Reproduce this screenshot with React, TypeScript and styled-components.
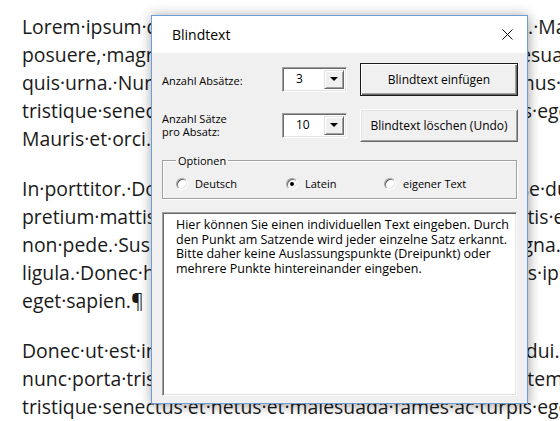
import styled, { createGlobalStyle } from "styled-components"

const GlobalStyle = createGlobalStyle`
  html, body {
    margin: 0;
    padding: 0;
    background: #fff;
  }
  body {
    width: 560px;
    height: 421px;
    overflow: hidden;
  }
`

const Seite = styled.div`
  position: relative;
  width: 560px;
  height: 421px;
  overflow: hidden;
  background: #fff;
`

const Dokument = styled.div`
  padding: 13px 0 0 22px;
  font-family: "Open Sans", sans-serif;
  font-size: 19.4px;
  line-height: 28px;
  color: #1a1a1a;
  white-space: nowrap;
`

const Absatz = styled.p`
  margin: 0 0 22px;
`

const Zeile = styled.div``

const Dialog = styled.div`
  position: absolute;
  left: 151px;
  top: 15px;
  width: 377px;
  height: 389px;
  box-sizing: border-box;
  border: 1px solid #6d9fd6;
  background: #f0f0f0;
  box-shadow: 0 0 12px rgba(0, 0, 0, 0.28), 2px 4px 10px rgba(0, 0, 0, 0.12);
  display: flex;
  flex-direction: column;
  font-family: "Open Sans", sans-serif;
  color: #000;
`

const Titelleiste = styled.div`
  height: 37px;
  background: #fff;
  display: flex;
  align-items: center;
  justify-content: space-between;
  padding: 0 14px 0 20px;
  font-size: 14px;
`

const Inhalt = styled.div`
  padding: 10px 9px 0 10px;
  display: flex;
  flex-direction: column;
  font-size: 11px;
`

const Raster = styled.div`
  display: grid;
  grid-template-columns: 107px 65px 158px;
  column-gap: 13px;
  grid-auto-rows: 32px;
  row-gap: 14px;
  align-items: center;
`

const Beschriftung = styled.div<{ $versatz?: number }>`
  line-height: 13px;
  margin-top: ${p => p.$versatz ?? 0}px;
`

const Kombi = styled.div`
  width: 65px;
  height: 25px;
  box-sizing: border-box;
  display: flex;
  background: #fff;
  border: 1px solid;
  border-color: #a0a0a0 #fff #fff #a0a0a0;
  box-shadow: inset 1px 1px 0 #696969, inset -1px -1px 0 #e3e3e3;
`

const KombiWert = styled.span`
  flex: 1;
  padding-left: 13px;
  font-size: 12px;
  line-height: 21px;
`

const KombiPfeil = styled.div`
  width: 20px;
  margin: 2px 2px 2px 0;
  box-sizing: border-box;
  background: #f0f0f0;
  border: 1px solid;
  border-color: #e3e3e3 #696969 #696969 #e3e3e3;
  box-shadow: inset 1px 1px 0 #fff, inset -1px -1px 0 #a0a0a0;
  display: flex;
  align-items: center;
  justify-content: center;

  &::after {
    content: "";
    border-left: 4px solid transparent;
    border-right: 4px solid transparent;
    border-top: 4px solid #000;
  }
`

const Knopf = styled.button<{ $standard?: boolean }>`
  height: 33px;
  width: 158px;
  padding: 0;
  font-family: inherit;
  font-size: 12px;
  color: #000;
  background: #f0f0f0;
  border: 1px solid;
  border-color: ${p => (p.$standard ? "#1a1a1a" : "#fff #696969 #696969 #fff")};
  box-shadow: ${p =>
    p.$standard
      ? "inset 1px 1px 0 #fff, inset -1px -1px 0 #696969, inset -2px -2px 0 #a0a0a0"
      : "inset 1px 1px 0 #e3e3e3, inset -1px -1px 0 #a0a0a0"};
`

const Rahmen = styled.fieldset`
  margin: 13px 0 0;
  padding: 10px 0 8px 13px;
  width: 355px;
  box-sizing: border-box;
  border: 1px solid #a0a0a0;
  box-shadow: 1px 1px 0 #fff, inset 1px 1px 0 #fff;
  display: flex;
  align-items: center;
`

const Legende = styled.legend`
  padding: 0 2px;
  line-height: 13px;
`

const Option = styled.label<{ $breite?: number }>`
  display: flex;
  align-items: center;
  gap: 7px;
  line-height: 13px;
  width: ${p => (p.$breite ? `${p.$breite}px` : "auto")};
`

const Kreis = styled.span<{ $aktiv?: boolean }>`
  width: 12px;
  height: 12px;
  box-sizing: border-box;
  border-radius: 50%;
  background: #fff;
  border: 1px solid;
  border-color: #a0a0a0 #fff #fff #a0a0a0;
  box-shadow: inset 1px 1px 0 #696969, inset -1px -1px 0 #e3e3e3;
  display: flex;
  align-items: center;
  justify-content: center;

  &::after {
    content: "";
    width: 4px;
    height: 4px;
    border-radius: 50%;
    background: ${p => (p.$aktiv ? "#000" : "transparent")};
  }
`

const Textfeld = styled.div`
  margin-top: 13px;
  width: 355px;
  height: 184px;
  box-sizing: border-box;
  background: #fff;
  border: 1px solid;
  border-color: #a0a0a0 #fff #fff #a0a0a0;
  box-shadow: inset 1px 1px 0 #696969, inset -1px -1px 0 #e3e3e3;
  padding: 5px 2px 0 13px;
  font-size: 12.5px;
  line-height: 14.7px;
  white-space: pre-line;
`

const absaetze = [
  [
    "Lorem·ipsum·dolor·sit·amet,·consectetuer·adipiscing·elit.·Maecenas·porttitor",
    "posuere,·magna·sed·pulvinar·ultricies,·purus·lectus·malesuada·libero,",
    "quis·urna.·Nunc·viverra·imperdiet·enim.·Fusce·est.·Vivamus·a·tellus.·",
    "tristique·senectus·et·netus·et·malesuada·fames·ac·turpis·egestas.",
    "Mauris·et·orci.",
  ],
  [
    "In·porttitor.·Donec·laoreet·nonummy·augue.·Suspendisse·dui·purus,",
    "pretium·mattis,·nunc.·Mauris·eget·neque·at·sem·venenatis·eleifend.",
    "non·pede.·Suspendisse·dapibus·lorem·pellentesque·magna.·Integer",
    "ligula.·Donec·hendrerit,·felis·et·imperdiet·euismod,·purus·ipsum",
    "eget·sapien.¶",
  ],
  [
    "Donec·ut·est·in·lectus·consequat·consequat.·Etiam·eget·dui.·Aliquam",
    "nunc·porta·tristique.·Proin·nec·augue.·Quisque·aliquam·tempor·magna.",
    "tristique·senectus·et·netus·et·malesuada·fames·ac·turpis·egestas.",
  ],
]

const hinweis =
  "Hier können Sie einen individuellen Text eingeben. Durch\nden Punkt am Satzende wird jeder einzelne Satz erkannt.\nBitte daher keine Auslassungspunkte (Dreipunkt) oder\nmehrere Punkte hintereinander eingeben."

const App = () => {
  return (
    <Seite>
      <GlobalStyle />
      <Dokument>
        {absaetze.map((zeilen, i) => (
          <Absatz key={i}>
            {zeilen.map((z, j) => (
              <Zeile key={j}>{z}</Zeile>
            ))}
          </Absatz>
        ))}
      </Dokument>

      <Dialog>
        <Titelleiste>
          <span>Blindtext</span>
          <svg width="11" height="11" viewBox="0 0 11 11">
            <path d="M0.5 0.5 L10.5 10.5 M10.5 0.5 L0.5 10.5" stroke="#111" strokeWidth="1" fill="none" />
          </svg>
        </Titelleiste>
        <Inhalt>
          <Raster>
            <Beschriftung $versatz={3}>Anzahl Absätze:</Beschriftung>
            <Kombi>
              <KombiWert>3</KombiWert>
              <KombiPfeil />
            </Kombi>
            <Knopf $standard>Blindtext einfügen</Knopf>

            <Beschriftung>
              Anzahl Sätze
              <br />
              pro Absatz:
            </Beschriftung>
            <Kombi>
              <KombiWert>10</KombiWert>
              <KombiPfeil />
            </Kombi>
            <Knopf>Blindtext löschen (Undo)</Knopf>
          </Raster>

          <Rahmen>
            <Legende>Optionen</Legende>
            <Option $breite={110}>
              <Kreis />
              Deutsch
            </Option>
            <Option $breite={98}>
              <Kreis $aktiv />
              Latein
            </Option>
            <Option>
              <Kreis />
              eigener Text
            </Option>
          </Rahmen>

          <Textfeld>{hinweis}</Textfeld>
        </Inhalt>
      </Dialog>
    </Seite>
  )
}

export default App
